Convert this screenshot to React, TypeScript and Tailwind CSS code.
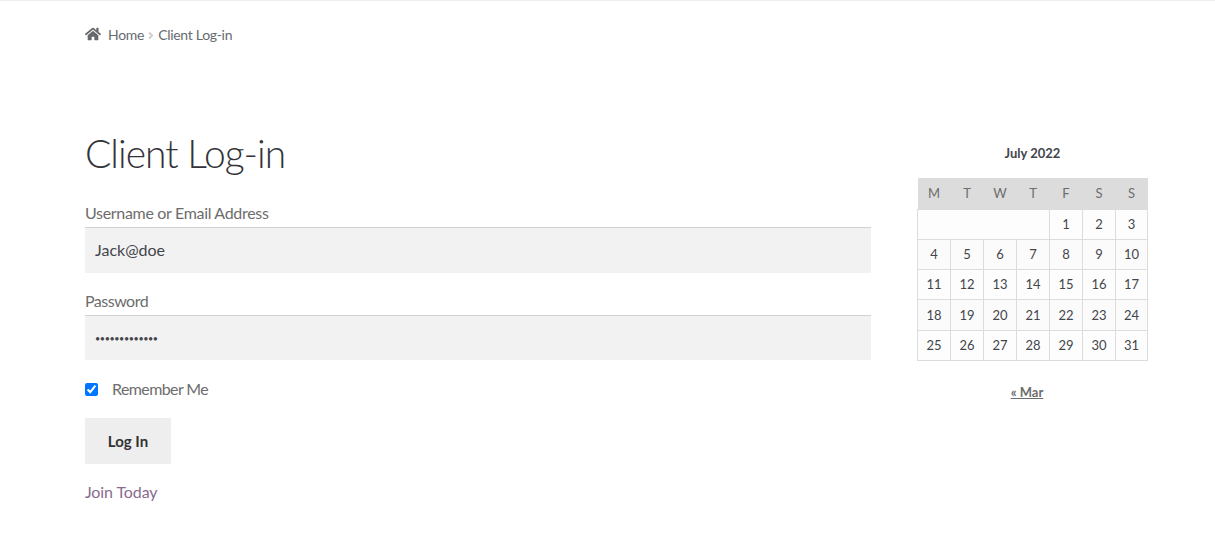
import { FaHome } from "react-icons/fa";

const weeks: (number | null)[][] = [
  [null, null, null, null, 1, 2, 3],
  [4, 5, 6, 7, 8, 9, 10],
  [11, 12, 13, 14, 15, 16, 17],
  [18, 19, 20, 21, 22, 23, 24],
  [25, 26, 27, 28, 29, 30, 31],
];
const heads = ["M", "T", "W", "T", "F", "S", "S"];
const rowH = ["h-[30px]", "h-[30px]", "h-[30px]", "h-[31px]", "h-[30px]"];

export default function App() {
  return (
    <div className="min-h-[560px] bg-white border-t border-[#eeeeee] pl-[85px] font-['Lato','Noto_Sans',sans-serif] text-[#6d6d6d]">
      <nav className="flex items-center h-[20px] mt-[23px] text-[14px] tracking-[-0.3px] text-[#666b70]">
        <FaHome className="w-[16px] h-[16px] text-[#66686c]" />
        <span className="ml-[7px]">Home</span>
        <svg viewBox="0 0 8 10" className="w-[6px] h-[9px] ml-[4px] mr-[4px] mt-[2px]" fill="none" stroke="#cfcfcf" strokeWidth="2.6">
          <path d="M1.5 1 L5.5 5 L1.5 9" />
        </svg>
        <span>Client Log-in</span>
      </nav>

      <div className="flex mt-[84px]">
        <main className="w-[786px] shrink-0">
          <h1 className="text-[39px] leading-[50px] font-light text-[#333339] tracking-[-1px]">Client Log-in</h1>
          <div className="mt-[23px] text-[16px] leading-[24px] tracking-[-0.32px]">Username or Email Address</div>
          <div className="mt-[2px] h-[46px] flex items-center px-[10px] pb-[1px] bg-[#f2f2f2] border-t border-[#d2d2d2] text-[16px] text-[#43454b]">Jack@doe</div>
          <div className="mt-[16px] text-[16px] leading-[24px] tracking-[-0.5px]">Password</div>
          <div className="mt-[2px] h-[45px] flex items-center px-[10px] bg-[#f2f2f2] border-t border-[#d2d2d2] text-[9px] leading-none tracking-[-0.4px] text-[#43454b]">•••••••••••••</div>
          <label className="flex items-center mt-[17px] h-[24px] text-[16px]">
            <input type="checkbox" defaultChecked className="w-[13px] h-[13px] m-0 accent-[#0075ff]" />
            <span className="ml-[14px] tracking-[-0.6px]">Remember Me</span>
          </label>
          <button className="block mt-[17px] w-[86px] h-[46px] bg-[#eeeeee] text-[15px] font-bold text-[#333333]">Log In</button>
          <a className="block mt-[16px] text-[16px] leading-[24px] tracking-[-0.1px] text-[#8a6a8f]">Join Today</a>
        </main>

        <aside className="ml-[46px] w-[231px] shrink-0 mt-[15px]">
          <div className="text-center text-[13px] leading-[20px] font-bold text-[#43454b]">July 2022</div>
          <table className="mt-[15px] w-[231px] table-fixed border-collapse text-[13px] text-[#43454b]">
            <colgroup>
              <col className="w-[33px]" />
              <col className="w-[33px]" />
              <col className="w-[33px]" />
              <col className="w-[33px]" />
              <col className="w-[33px]" />
              <col className="w-[33px]" />
              <col className="w-[32px]" />
            </colgroup>
            <thead>
              <tr className="h-[31px] bg-[#dcdcdc]">
                {heads.map((h, i) => (
                  <th key={i} className="font-normal text-[#6d6d6d] p-0 pt-[1px]">{h}</th>
                ))}
              </tr>
            </thead>
            <tbody>
              {weeks.map((w, r) => (
                <tr key={r} className={rowH[r] + " " + (r % 2 ? "bg-[#fbfbfb]" : "bg-[#fdfdfd]")}>
                  {r === 0 ? <td colSpan={4} className="border border-[#dcdcdc]" /> : null}
                  {w.map((d, i) =>
                    d === null ? null : (
                      <td key={i} className="border border-[#dcdcdc] text-center p-0 pt-[2px]">{d}</td>
                    )
                  )}
                </tr>
              ))}
            </tbody>
          </table>
          <div className="mt-[21px] text-center pr-[11px] text-[13px] leading-[20px] font-bold">
            <a className="underline text-[#6d6d6d]">« Mar</a>
          </div>
        </aside>
      </div>
    </div>
  );
}
